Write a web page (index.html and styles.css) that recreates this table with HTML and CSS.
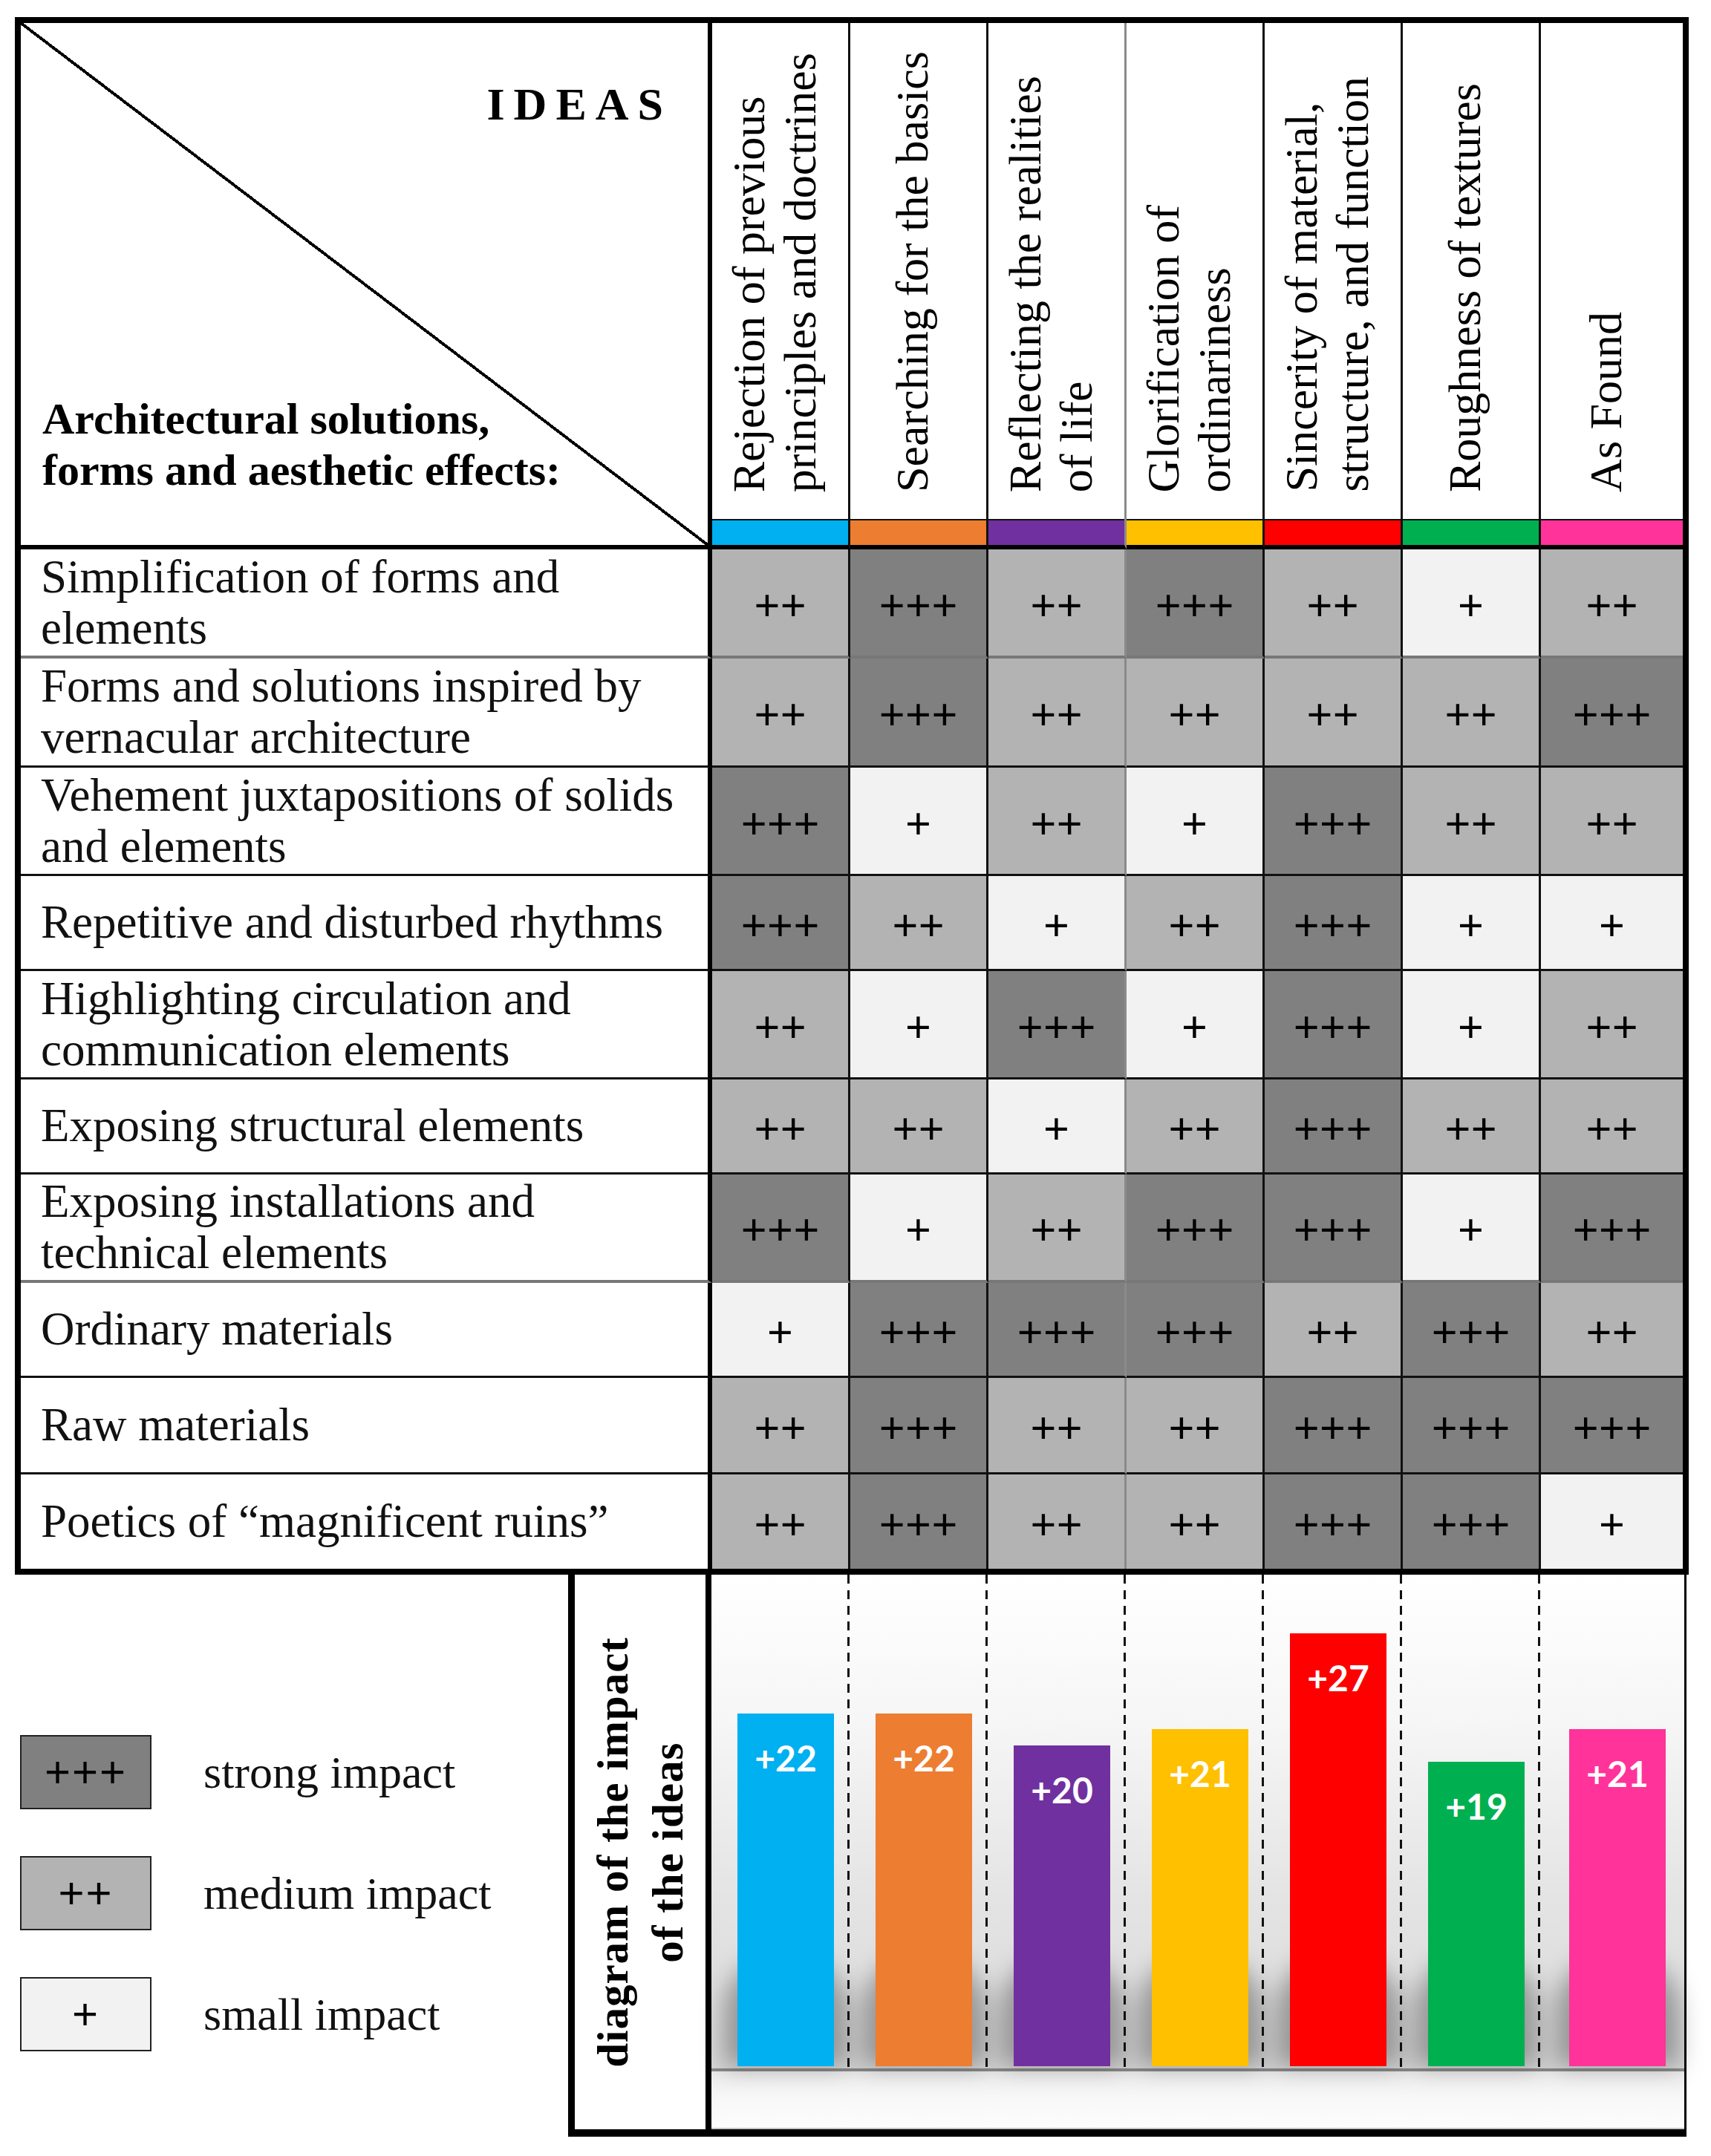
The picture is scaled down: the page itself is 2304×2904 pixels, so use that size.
FILE: index.html
```html
<!DOCTYPE html>
<html lang="en">
<head>
<meta charset="utf-8">
<title>Ideas and architectural solutions</title>
<link rel="stylesheet" href="styles.css">
</head>
<body>
<div class="figure">
  <div class="matrix">
    <div class="corner">
      <div class="ideas">IDEAS</div>
      <div class="corner-title">Architectural solutions,<br>forms and aesthetic effects:</div>
    </div>
    <div class="idea"><div class="idea-text"><span class="vt">Rejection of previous<br>principles and doctrines</span></div><div class="strip c1"></div></div>
    <div class="idea"><div class="idea-text"><span class="vt">Searching for the basics</span></div><div class="strip c2"></div></div>
    <div class="idea"><div class="idea-text"><span class="vt">Reflecting the realities<br>of life</span></div><div class="strip c3"></div></div>
    <div class="idea"><div class="idea-text"><span class="vt">Glorification of<br>ordinariness</span></div><div class="strip c4"></div></div>
    <div class="idea"><div class="idea-text"><span class="vt">Sincerity of material,<br>structure, and function</span></div><div class="strip c5"></div></div>
    <div class="idea"><div class="idea-text"><span class="vt">Roughness of textures</span></div><div class="strip c6"></div></div>
    <div class="idea"><div class="idea-text"><span class="vt">As Found</span></div><div class="strip c7"></div></div>

    <div class="label gray">Simplification of forms and<br>elements</div>
    <div class="cell s2 gray">++</div><div class="cell s3 gray">+++</div><div class="cell s2 gray">++</div><div class="cell s3 gray">+++</div><div class="cell s2 gray">++</div><div class="cell s1 gray">+</div><div class="cell s2 gray">++</div>

    <div class="label">Forms and solutions inspired by<br>vernacular architecture</div>
    <div class="cell s2">++</div><div class="cell s3">+++</div><div class="cell s2">++</div><div class="cell s2">++</div><div class="cell s2">++</div><div class="cell s2">++</div><div class="cell s3">+++</div>

    <div class="label">Vehement juxtapositions of solids<br>and elements</div>
    <div class="cell s3">+++</div><div class="cell s1">+</div><div class="cell s2">++</div><div class="cell s1">+</div><div class="cell s3">+++</div><div class="cell s2">++</div><div class="cell s2">++</div>

    <div class="label">Repetitive and disturbed rhythms</div>
    <div class="cell s3">+++</div><div class="cell s2">++</div><div class="cell s1">+</div><div class="cell s2">++</div><div class="cell s3">+++</div><div class="cell s1">+</div><div class="cell s1">+</div>

    <div class="label">Highlighting circulation and<br>communication elements</div>
    <div class="cell s2">++</div><div class="cell s1">+</div><div class="cell s3">+++</div><div class="cell s1">+</div><div class="cell s3">+++</div><div class="cell s1">+</div><div class="cell s2">++</div>

    <div class="label">Exposing structural elements</div>
    <div class="cell s2">++</div><div class="cell s2">++</div><div class="cell s1">+</div><div class="cell s2">++</div><div class="cell s3">+++</div><div class="cell s2">++</div><div class="cell s2">++</div>

    <div class="label gray">Exposing installations and<br>technical elements</div>
    <div class="cell s3 gray">+++</div><div class="cell s1 gray">+</div><div class="cell s2 gray">++</div><div class="cell s3 gray">+++</div><div class="cell s3 gray">+++</div><div class="cell s1 gray">+</div><div class="cell s3 gray">+++</div>

    <div class="label">Ordinary materials</div>
    <div class="cell s1">+</div><div class="cell s3">+++</div><div class="cell s3">+++</div><div class="cell s3">+++</div><div class="cell s2">++</div><div class="cell s3">+++</div><div class="cell s2">++</div>

    <div class="label">Raw materials</div>
    <div class="cell s2">++</div><div class="cell s3">+++</div><div class="cell s2">++</div><div class="cell s2">++</div><div class="cell s3">+++</div><div class="cell s3">+++</div><div class="cell s3">+++</div>

    <div class="label last">Poetics of “magnificent ruins”</div>
    <div class="cell s2 last">++</div><div class="cell s3 last">+++</div><div class="cell s2 last">++</div><div class="cell s2 last">++</div><div class="cell s3 last">+++</div><div class="cell s3 last">+++</div><div class="cell s1 last">+</div>
  </div>

  <div class="bottom">
    <div class="legend">
      <div class="litem"><div class="lbox s3">+++</div><div class="llabel">strong impact</div></div>
      <div class="litem"><div class="lbox s2">++</div><div class="llabel">medium impact</div></div>
      <div class="litem"><div class="lbox s1">+</div><div class="llabel">small impact</div></div>
    </div>
    <div class="dtitle"><span class="dt-text">diagram of the impact<br>of the ideas</span></div>
    <div class="plot">
      <div class="bars">
        <div class="bcol"><div class="bar c1" style="height:475px"><span>+22</span></div></div>
        <div class="bcol"><div class="bar c2" style="height:475px"><span>+22</span></div></div>
        <div class="bcol"><div class="bar c3" style="height:432px"><span>+20</span></div></div>
        <div class="bcol"><div class="bar c4" style="height:454px"><span>+21</span></div></div>
        <div class="bcol"><div class="bar c5" style="height:583px"><span>+27</span></div></div>
        <div class="bcol"><div class="bar c6" style="height:410px"><span>+19</span></div></div>
        <div class="bcol"><div class="bar c7" style="height:454px"><span>+21</span></div></div>
      </div>
      <div class="baseline"></div>
      <div class="floor"></div>
    </div>
  </div>
</div>
</body>
</html>
```

FILE: styles.css
```css
* { box-sizing: border-box; }

html, body {
  margin: 0;
  padding: 0;
  background: #fff;
}

body {
  font-family: "Liberation Serif", "Times New Roman", serif;
  color: #000;
}

.figure {
  padding: 23px 0 0 20px;
  width: 2304px;
  height: 2904px;
}

/* ---------- matrix ---------- */
.matrix {
  width: 2254px;
  height: 2098px;
  border: 8px solid #000;
  display: grid;
  grid-template-columns: 931px repeat(6, 186px) 191px;
  grid-template-rows: 709px 147px 147px 146px 128px 146px 128px 146px 128px 130px 127px;
}

.corner {
  border-right: 6px solid #000;
  border-bottom: 6px solid #000;
  background: linear-gradient(to top right,
    transparent calc(50% - 2px), #000 calc(50% - 2px),
    #000 calc(50% + 2px), transparent calc(50% + 2px));
  display: flex;
  flex-direction: column;
  justify-content: space-between;
  padding: 78px 48px 66px 29px;
}

.ideas {
  font-weight: bold;
  font-size: 62px;
  line-height: 1;
  letter-spacing: 12px;
  text-align: right;
}

.corner-title {
  font-weight: bold;
  font-size: 60px;
  line-height: 69px;
}

.idea {
  border-right: 3px solid #111;
  border-bottom: 6px solid #000;
  display: flex;
  flex-direction: column;
}

.idea-text {
  flex: 1;
  display: flex;
  justify-content: center;
  align-items: flex-end;
  padding-bottom: 36px;
  padding-right: 16px;
}

.vt {
  writing-mode: vertical-rl;
  transform: rotate(180deg);
  font-size: 62px;
  line-height: 69px;
  white-space: nowrap;
}

.strip {
  height: 35px;
  border-top: 2px solid #111;
}

.c1 { background: #00b0f0; }
.c2 { background: #ed7d31; }
.c3 { background: #7030a0; }
.c4 { background: #ffc000; }
.c5 { background: #ff0000; }
.c6 { background: #00b050; }
.c7 { background: #ff3399; }

.label {
  border-right: 6px solid #000;
  border-bottom: 3px solid #111;
  padding-left: 27px;
  display: flex;
  align-items: center;
  font-size: 63px;
  line-height: 69px;
  color: #111;
}

.cell {
  border-right: 3px solid #111;
  border-bottom: 3px solid #111;
  display: flex;
  align-items: center;
  justify-content: center;
  font-size: 62px;
  font-weight: bold;
  line-height: 1;
  padding-top: 6px;
}

.matrix > :nth-child(8n) { border-right: none; }
.matrix > :nth-child(8n+4) { border-right-color: #8a8a8a; }

.label.gray, .cell.gray {
  border-bottom: 4px solid #777;
}

.label.last, .cell.last { border-bottom: none; }

.s1 { background: #f2f2f2; }
.s2 { background: #b3b3b3; }
.s3 { background: #808080; }

/* ---------- bottom part ---------- */
.bottom {
  display: flex;
  height: 757px;
}

.legend {
  width: 745px;
  padding: 216px 0 0 7px;
  display: flex;
  flex-direction: column;
  gap: 63px;
}

.litem {
  display: flex;
  align-items: center;
  gap: 70px;
}

.lbox {
  width: 177px;
  height: 100px;
  border: 2px solid #222;
  display: flex;
  align-items: center;
  justify-content: center;
  font-family: "Liberation Sans", Arial, sans-serif;
  font-size: 60px;
  line-height: 1;
  letter-spacing: 2px;
}

.llabel {
  font-size: 62px;
  line-height: 1;
  color: #111;
}

.dtitle {
  width: 193px;
  border-left: 9px solid #000;
  border-right: 8px solid #000;
  border-bottom: 10px solid #000;
  display: flex;
  align-items: center;
  justify-content: center;
}

.dt-text {
  writing-mode: vertical-rl;
  transform: rotate(180deg);
  font-weight: bold;
  font-size: 59px;
  line-height: 74px;
  text-align: center;
  white-space: nowrap;
  letter-spacing: 1px;
}

.plot {
  width: 1313px;
  border-right: 3px solid #000;
  border-bottom: 10px solid #000;
  display: flex;
  flex-direction: column;
}

.bars {
  height: 665px;
  display: grid;
  grid-template-columns: repeat(6, 186px) 1fr;
  background: linear-gradient(to bottom, #ffffff 0%, #f6f6f6 30%, #e4e4e4 65%, #d8d8d8 100%);
  isolation: isolate;
}

.bcol {
  display: flex;
  align-items: flex-end;
  justify-content: center;
  padding-left: 14px;
  padding-bottom: 3px;
}

.bcol:not(:last-child) {
  background-image: repeating-linear-gradient(to bottom, #111 0 12px, transparent 12px 21px);
  background-size: 3px 100%;
  background-repeat: no-repeat;
  background-position: right top;
}

.bar {
  position: relative;
  width: 130px;
}

.bar::before {
  content: "";
  position: absolute;
  left: -18px;
  right: -18px;
  bottom: 0;
  height: 150px;
  background: rgba(0, 0, 0, 0.32);
  filter: blur(16px);
  border-radius: 50% 50% 0 0;
  z-index: -1;
}

.bar span {
  display: block;
  text-align: center;
  color: #fff;
  font-family: Lato, "Open Sans", sans-serif;
  font-weight: 700;
  font-size: 48px;
  line-height: 1;
  padding-top: 36px;
}

.baseline {
  height: 4px;
  background: #8a8a8a;
}

.floor {
  height: 78px;
  background: linear-gradient(to bottom, #ececec 0%, #f8f8f8 50%, #fdfdfd 100%);
  border-bottom: 2px solid #c4c4c4;
}
```
